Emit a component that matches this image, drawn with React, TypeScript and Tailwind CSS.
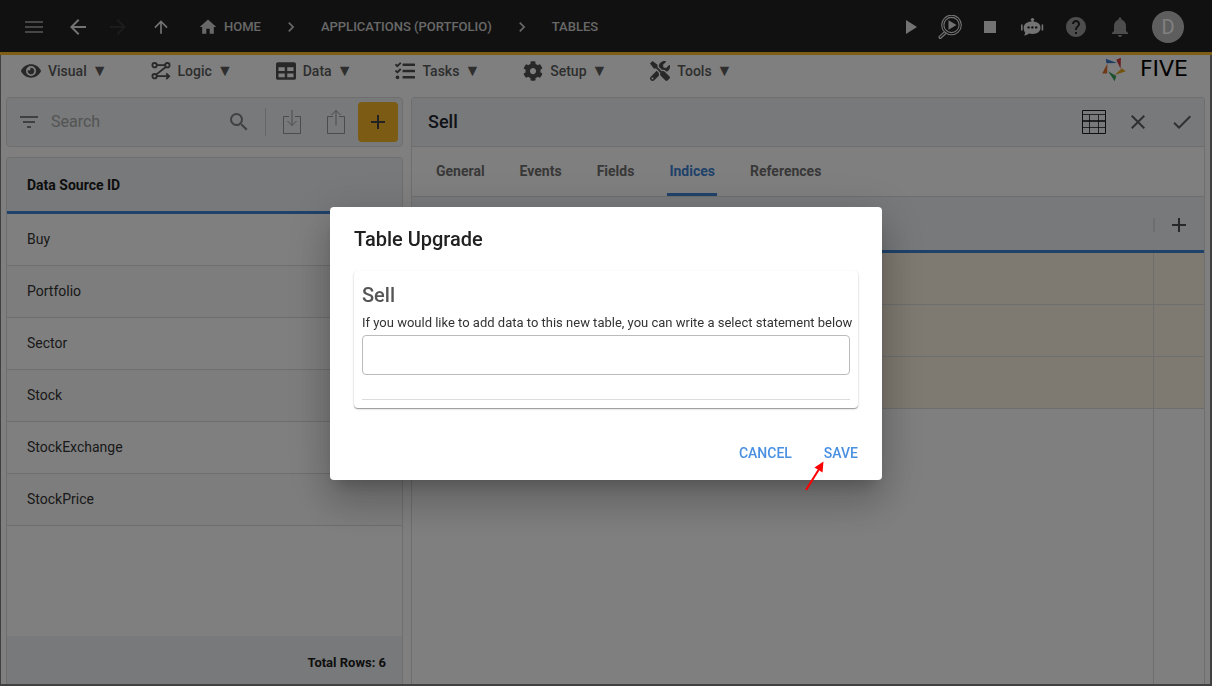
import React, { useState } from 'react';
import {
  MdAdd,
  MdArrowBack,
  MdArrowForward,
  MdArrowUpward,
  MdClose,
  MdDone,
  MdFilterList,
  MdHelp,
  MdHome,
  MdMenu,
  MdNavigateNext,
  MdNotifications,
  MdPlayArrow,
  MdSearch,
  MdStop,
} from 'react-icons/md';
import { FaCog, FaEye, FaTable, FaTasks, FaTools } from 'react-icons/fa';

const tables = ['Buy', 'Portfolio', 'Sector', 'Stock', 'StockExchange', 'StockPrice'];
const tabs = ['General', 'Events', 'Fields', 'Indices', 'References'];

const LogicIcon: React.FC = () => (
  <svg viewBox="0 0 20 20" className="size-5" fill="none" stroke="currentColor" strokeWidth="1.8">
    <circle cx="3.6" cy="4.2" r="2.2" />
    <circle cx="16.4" cy="4.2" r="2.2" />
    <circle cx="3.6" cy="15.2" r="2.2" />
    <path d="M6 4.2h8M14.8 6 5.4 13.4M6 15.2h12M15.2 12.4 18.2 15.2l-3 2.8" />
  </svg>
);

const InspectIcon: React.FC = () => (
  <svg viewBox="0 0 24 24" className="size-6" fill="none" stroke="currentColor">
    <circle cx="13.5" cy="10" r="9.8" strokeWidth="1.1" />
    <circle cx="13.5" cy="10" r="7.6" strokeWidth="1.1" />
    <path d="M6.6 16.6 1.4 21.4a1 1 0 0 0 1.6 1.6l5.2-4.8" strokeWidth="1.2" />
    <path d="M10.5 5.2v9.6l8-4.8z" fill="currentColor" stroke="none" />
  </svg>
);

const BotIcon: React.FC = () => (
  <svg viewBox="0 0 24 24" className="size-6" fill="currentColor">
    <circle cx="12.5" cy="4.6" r="1.7" />
    <path d="M11.8 5h1.4v3h-1.4zM1 9.5h1.6v6H1zM21.6 9.5h1.6v6h-1.6z" />
    <path d="M12.3 6.6c5.2 0 8.2 2.4 8.2 6.2s-3 6.1-8.2 6.1c-1.2 0-2.3-.1-3.3-.4-1.4 1.2-3 1.9-5.2 2 .9-.9 1.3-1.9 1.3-3.1-1-1.2-1.4-2.7-1.4-4.6 0-3.8 3.4-6.2 8.6-6.2z" />
    <g fill="#232323">
      <circle cx="8.6" cy="12.4" r="1.2" />
      <circle cx="12.4" cy="12.4" r="1.2" />
      <circle cx="16.2" cy="12.4" r="1.2" />
    </g>
  </svg>
);

const ImportIcon: React.FC = () => (
  <svg viewBox="0 0 24 24" className="size-6" fill="none" stroke="currentColor">
    <path d="M9 6.5H3.5v17h17v-17H15M12 0v15.5M7.5 11l4.5 4.5 4.5-4.5" />
  </svg>
);

const ExportIcon: React.FC = () => (
  <svg viewBox="0 0 24 24" className="size-6" fill="none" stroke="currentColor">
    <path d="M9 6.5H3.5v17h17v-17H15M12 15.5V.5M7.5 5 12 .5 16.5 5" />
  </svg>
);

const GridIcon: React.FC = () => (
  <svg viewBox="0 0 24 24" className="size-6" fill="none" stroke="currentColor">
    <path d="M.5.5h23v23H.5z" />
    <path d="M1 4.5h22M1 10.5h22M1 11.5h22M1 17.5h22M7.5 5v18M16.5 5v18" strokeOpacity="0.8" />
  </svg>
);

const Logo: React.FC = () => (
  <div className="flex items-center gap-3.5 text-black">
    <svg viewBox="0 0 72 76" className="h-[25px] w-6">
      <path d="M11 5 45 18 13 19z" fill="#3c78c8" />
      <path d="M57 2 56 36 43 8z" fill="#d23b3b" />
      <path d="M16 20 15 50 0 50z" fill="#e0702a" />
      <path d="M18 43 43 58 38 74z" fill="#3aa05a" />
      <path d="M38 55 60 34 72 43z" fill="#e5a81e" />
    </svg>
    <span className="font-['DejaVu_Sans',sans-serif] text-[22px] leading-7">FIVE</span>
  </div>
);

const menus = [
  { label: 'Visual', icon: <FaEye className="size-5" /> },
  { label: 'Logic', icon: <LogicIcon /> },
  { label: 'Data', icon: <FaTable className="size-5" /> },
  { label: 'Tasks', icon: <FaTasks className="size-5" /> },
  { label: 'Setup', icon: <FaCog className="size-5" /> },
  { label: 'Tools', icon: <FaTools className="size-5" /> },
];

const TopBar: React.FC = () => (
  <header className="flex h-[55px] shrink-0 items-center justify-between border-b-3 border-[#fdbd28] bg-[#232323] pt-0.5 pr-7 pl-[22px] text-[#e6e6e6]">
    <div className="flex items-center">
      <button aria-label="Menu" className="text-[#8c8c8c]"><MdMenu className="size-6" /></button>
      <button aria-label="Back" className="ml-5"><MdArrowBack className="size-6" /></button>
      <button aria-label="Forward" className="ml-4 text-[#383838]"><MdArrowForward className="size-6" /></button>
      <button aria-label="Up" className="ml-[21px]"><MdArrowUpward className="size-5" /></button>
      <nav className="ml-[27px] flex items-center gap-5 text-[13px] font-medium text-[#d0d0d0]">
        <a href="#home" className="flex items-center gap-1.5">
          <MdHome className="size-5" />
          HOME
        </a>
        <MdNavigateNext className="size-5" />
        <a href="#applications">APPLICATIONS (PORTFOLIO)</a>
        <MdNavigateNext className="size-5" />
        <a href="#tables">TABLES</a>
      </nav>
    </div>
    <div className="flex items-center gap-[18px]">
      <div className="flex items-center gap-4">
        <button aria-label="Run"><MdPlayArrow className="size-6" /></button>
        <button aria-label="Inspect"><InspectIcon /></button>
        <button aria-label="Stop"><MdStop className="size-6" /></button>
      </div>
      <div className="flex items-center gap-5">
        <button aria-label="Assistant"><BotIcon /></button>
        <button aria-label="Help" className="text-[#9a9a9a]"><MdHelp className="size-6" /></button>
        <button aria-label="Notifications" className="text-[#9a9a9a]"><MdNotifications className="size-6" /></button>
        <button className="size-8 rounded-full bg-[#bdbdbd] text-xl text-white">D</button>
      </div>
    </div>
  </header>
);

const MenuBar: React.FC = () => (
  <div className="flex h-[42px] shrink-0 items-start justify-between pr-[22px] pl-5 text-[#5c5c5c]">
    <div className="flex h-8 items-center gap-[43px] text-sm font-medium">
      {menus.map((menu) => (
        <button key={menu.label} className="flex items-center gap-[7px]">
          <span className="text-[#505050]">{menu.icon}</span>
          <span>{menu.label}</span>
          <span className="-ml-0.5 text-base leading-5">▼</span>
        </button>
      ))}
    </div>
    <Logo />
  </div>
);

const TableList: React.FC = () => (
  <aside className="flex flex-col gap-2.5">
    <div className="flex h-[50px] shrink-0 items-center rounded border border-[#dcdcdc] bg-[#f0f2f4] pr-1 pl-2.5 text-[#808080]">
      <MdFilterList className="size-6" />
      <input
        aria-label="Search"
        placeholder="Search"
        className="ml-2.5 w-0 flex-1 bg-transparent text-base outline-none placeholder:text-[#a8a8a8]"
      />
      <MdSearch className="size-6" />
      <span className="ml-3.5 h-7 border-l border-[#cccccc]" />
      <button aria-label="Import" className="ml-3.5 text-[#989898]"><ImportIcon /></button>
      <button aria-label="Export" className="ml-5 text-[#989898]"><ExportIcon /></button>
      <button
        aria-label="Add table"
        className="ml-2.5 flex size-10 items-center justify-center rounded bg-[#f8b928] text-[#444444]"
      >
        <MdAdd className="size-6" />
      </button>
    </div>
    <div className="flex flex-1 flex-col overflow-hidden rounded-t border border-b-0 border-[#dcdcdc]">
      <table className="w-full border-separate border-spacing-0 text-left text-sm text-[#333333]">
        <thead>
          <tr className="h-14 bg-[#f0f2f4] text-[#1c1c1c]">
            <th className="border-b-3 border-[#3f84d4] px-5 font-bold">Data Source ID</th>
          </tr>
        </thead>
        <tbody>
          {tables.map((name) => (
            <tr key={name} className="h-[52px] even:bg-[#fafafa]">
              <td className="border-b border-[#dcdcdc] px-5 pb-0.5">{name}</td>
            </tr>
          ))}
        </tbody>
      </table>
      <div className="mt-auto flex h-12 items-center justify-end bg-[#f0f2f4] pt-1.5 pr-4 text-[13px] font-bold text-[#1c1c1c]">
        Total Rows: 6
      </div>
    </div>
  </aside>
);

const TableDetail: React.FC = () => {
  const [activeTab, setActiveTab] = useState('Indices');

  return (
    <main className="flex flex-col overflow-hidden rounded-t border border-b-0 border-[#dcdcdc]">
      <div className="flex h-[49px] shrink-0 items-center border-b border-[#dcdcdc] bg-[#f0f2f4] px-4 text-[#606060]">
        <h1 className="text-lg font-medium text-[#1f2430]">Sell</h1>
        <div className="-mr-1.5 ml-auto flex items-center gap-5">
          <button aria-label="Grid" className="text-[#1c1c1c]"><GridIcon /></button>
          <button aria-label="Close"><MdClose className="size-6" /></button>
          <button aria-label="Apply"><MdDone className="size-6" /></button>
        </div>
      </div>
      <div className="flex h-[50px] shrink-0 gap-[31px] border-b border-[#dcdcdc] px-[22px] text-sm font-bold">
        {tabs.map((tab) => (
          <button
            key={tab}
            onClick={() => setActiveTab(tab)}
            className={
              tab === activeTab
                ? 'border-b-3 border-[#3f84d4] px-0.5 pt-0.5 text-[#3f84d4]'
                : 'border-b-3 border-transparent px-0.5 pt-0.5 text-[#707070]'
            }
          >
            {tab}
          </button>
        ))}
      </div>
      <table className="w-full border-separate border-spacing-0">
        <thead>
          <tr className="h-14 bg-[#f0f2f4]">
            <th className="border-b-3 border-[#3f84d4]" />
            <th className="w-[51px] border-b-3 border-[#3f84d4] p-0">
              <div className="flex items-center pt-0.5">
                <span className="h-3.5 border-l-2 border-[#dcdcdc]" />
                <button aria-label="Add index" className="ml-3 text-[#505050]">
                  <MdAdd className="size-6" />
                </button>
              </div>
            </th>
          </tr>
        </thead>
        <tbody>
          {[0, 1, 2].map((row) => (
            <tr key={row} className="h-[52px] bg-[#fdf4e2]">
              <td className="border-b border-[#dcdcdc]" />
              <td className="border-b border-l border-[#dcdcdc]" />
            </tr>
          ))}
        </tbody>
      </table>
      <div className="flex flex-1 justify-end">
        <span className="w-[51px] border-l border-[#dcdcdc]" />
      </div>
    </main>
  );
};

const UpgradeDialog: React.FC = () => (
  <div className="fixed inset-0 flex items-center justify-center bg-black/50">
    <div
      role="dialog"
      aria-labelledby="upgrade-title"
      className="relative w-[552px] rounded bg-white px-6 pt-4 pb-2 shadow-[0_11px_15px_-7px_rgba(0,0,0,0.2),0_24px_38px_3px_rgba(0,0,0,0.14),0_9px_46px_8px_rgba(0,0,0,0.12)]"
    >
      <h2 id="upgrade-title" className="text-xl leading-8 font-medium text-[#212121]">Table Upgrade</h2>
      <div className="mt-4 rounded p-2 shadow-[0_1px_1px_rgba(0,0,0,0.35),0_1px_3px_rgba(0,0,0,0.12)]">
        <h3 className="text-xl leading-8 font-medium text-[#555555]">Sell</h3>
        <label htmlFor="statement" className="block text-[13px] leading-6 whitespace-nowrap text-[#333333]">
          If you would like to add data to this new table, you can write a select statement below
        </label>
        <input
          id="statement"
          className="block h-10 w-full rounded border border-[#bbbbbb] px-3 text-sm outline-none"
        />
        <hr className="mt-6 border-[#dcdcdc]" />
      </div>
      <div className="mt-7 flex h-9 items-center justify-end gap-8 pb-0.5 text-sm font-medium text-[#4a90e2]">
        <button>CANCEL</button>
        <button>SAVE</button>
      </div>
      <svg viewBox="0 0 22 32" className="absolute right-14 -bottom-3 h-8 w-[22px]" fill="#ff0000">
        <path d="M2 30 14.5 10" stroke="#ff0000" strokeWidth="2" />
        <path d="M19.5 1.5 18.5 12.5 10.5 7.5z" />
      </svg>
    </div>
  </div>
);

const App: React.FC = () => {
  return (
    <div className="flex h-screen flex-col overflow-hidden bg-white font-[Roboto,sans-serif]">
      <TopBar />
      <div className="flex flex-1 flex-col border-r-2 border-b-2 border-l border-[#808080]">
        <MenuBar />
        <div className="grid flex-1 grid-cols-[1fr_2fr] gap-2 px-[5px]">
          <TableList />
          <TableDetail />
        </div>
      </div>
      <UpgradeDialog />
    </div>
  );
};

export default App;
